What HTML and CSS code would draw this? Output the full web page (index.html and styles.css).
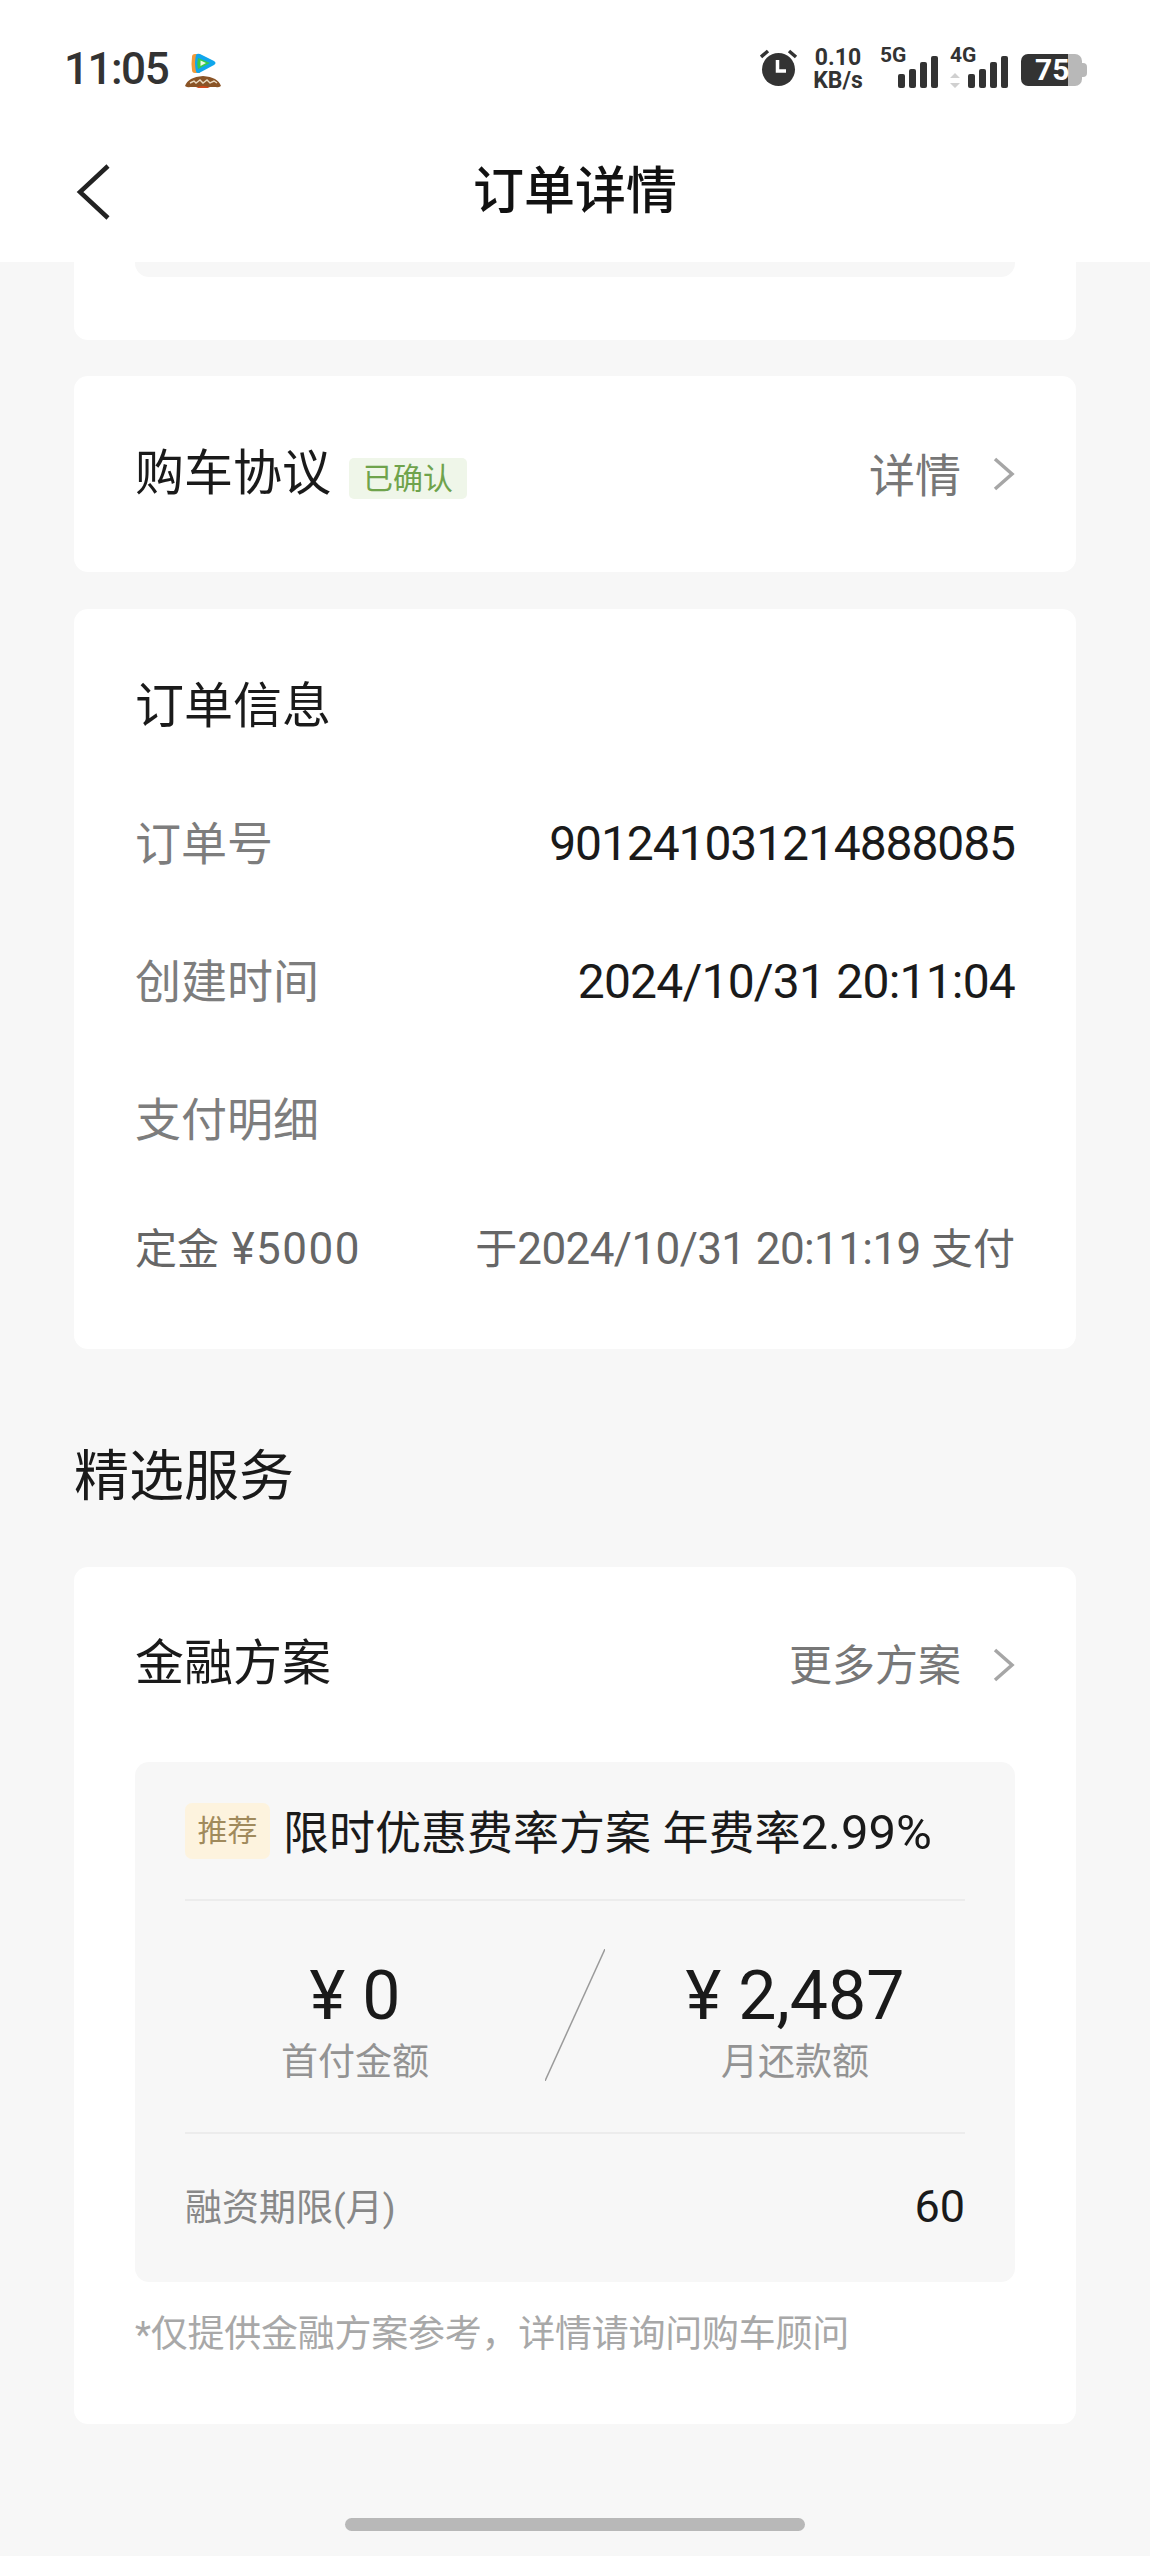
FILE: index.html
```html
<!DOCTYPE html>
<html lang="zh-CN">
<head>
    <meta charset="UTF-8">
    <meta name="viewport" content="width=device-width, initial-scale=1.0">
    <title>订单详情</title>
    <link rel="stylesheet" href="styles.css">
</head>
<body>
    <div id="header">
        <div class="status">
            <div class="status-left">
                <span class="time">11:05</span>
                <svg class="app-icon" width="38" height="36" viewBox="0 0 38 36">
                    <path d="M10 1 q-3 0 -3 3 q-1 7 0 13 q0 3 3 3 h5 v-19z" fill="#f29a38"/>
                    <path d="M11 2 q1 -2 4 -1 l14 7 q3 2 0 4 l-14 7.500 q-3 1.500 -4 -1 q-2 -8 0 -16.500z" fill="#10a6ec"/>
                    <path d="M13 5 l12 5 l-12 6 q-1.500 -5.500 0 -11z" fill="#36cb4a"/>
                    <path d="M15.500 7.500 l5.500 2.500 l-5.500 3z" fill="#eafbe8"/>
                    <path d="M0 33 q3 -9 18 -10 q15 1 18 10 q-3 2 -5 1 h-26 q-2 1 -5 -1z" fill="#8a5426"/>
                    <path d="M5 30 l4 -2 l2 2 l4 -3 l3 3 l4 -3 l3 3 l4 -2 l3 2" fill="none" stroke="#e8d9c0" stroke-width="1.400"/>
                    <path d="M11 35 q7 -4 14 0z" fill="#d24a1c"/>
                </svg>
            </div>
            <div class="status-right">
                <svg class="alarm" width="38" height="38" viewBox="0 0 38 38">
                    <circle cx="18.500" cy="20.500" r="16.500" fill="#333"/>
                    <path d="M1 8 L8 2 M36 8 L29 2" stroke="#333" stroke-width="3.500"/>
                    <path d="M17.500 11 V22 H26" fill="none" stroke="#fff" stroke-width="3.500"/>
                </svg>
                <div class="speed"><span>0.10</span><span>KB/s</span></div>
                <svg class="signal signal-5g" width="58" height="44" viewBox="0 0 58 44">
                    <text x="0" y="18">5G</text>
                    <rect x="18" y="30" width="7" height="14" rx="2"/>
                    <rect x="29" y="25" width="7" height="19" rx="2"/>
                    <rect x="40" y="18" width="7" height="26" rx="2"/>
                    <rect x="51" y="12" width="7" height="32" rx="2"/>
                </svg>
                <svg class="signal signal-4g" width="58" height="44" viewBox="0 0 58 44">
                    <text x="0" y="18">4G</text>
                    <path d="M5 29 l5 5 h-10z M5 44 l5 -5 h-10z" class="arrows"/>
                    <rect x="18" y="30" width="7" height="14" rx="2"/>
                    <rect x="29" y="25" width="7" height="19" rx="2"/>
                    <rect x="40" y="18" width="7" height="26" rx="2"/>
                    <rect x="51" y="12" width="7" height="32" rx="2"/>
                </svg>
                <div class="battery"><span>75</span></div>
            </div>
        </div>
        <div class="nav">
            <svg class="back" width="36" height="56" viewBox="0 0 36 56">
                <path d="M33 2 L5 28 L33 54" fill="none" stroke="#222" stroke-width="4.500"/>
            </svg>
            <h1>订单详情</h1>
        </div>
    </div>

    <div id="main">
        <div class="card card-stub"><div class="stub-inner"></div></div>

        <div class="card card-agreement">
            <div class="head-row">
                <div class="head-left">
                    <span class="card-title">购车协议</span>
                    <span class="tag-green">已确认</span>
                </div>
                <div class="more">
                    <span>详情</span>
                    <svg class="chevron" width="22" height="34" viewBox="0 0 22 34"><path d="M2 2 L19 17 L2 32" fill="none" stroke="#a6a6a6" stroke-width="3.500"/></svg>
                </div>
            </div>
        </div>

        <div class="card card-order">
            <div class="card-title order-title">订单信息</div>
            <div class="info-row"><span class="label">订单号</span><span class="value">901241031214888085</span></div>
            <div class="info-row"><span class="label">创建时间</span><span class="value value-date">2024/10/31 20:11:04</span></div>
            <div class="info-row"><span class="label">支付明细</span></div>
            <div class="info-row pay-row">
                <span class="pay-amount"><span class="pay-cn">定金</span> ¥5000</span>
                <span><span class="pay-cn">于</span>2024/10/31 20:11:19 <span class="pay-cn">支付</span></span>
            </div>
        </div>

        <h2>精选服务</h2>

        <div class="card card-finance">
            <div class="head-row finance-head">
                <span class="card-title">金融方案</span>
                <div class="more">
                    <span>更多方案</span>
                    <svg class="chevron" width="22" height="34" viewBox="0 0 22 34"><path d="M2 2 L19 17 L2 32" fill="none" stroke="#a6a6a6" stroke-width="3.500"/></svg>
                </div>
            </div>
            <div class="plan">
                <div class="plan-top">
                    <span class="tag-gold">推荐</span>
                    <span class="plan-name">限时优惠费率方案 年费率<span class="plan-rate">2.99%</span></span>
                </div>
                <div class="plan-stats">
                    <div class="stat">
                        <div class="amount">¥ 0</div>
                        <div class="stat-label">首付金额</div>
                    </div>
                    <svg class="slash" width="60" height="132" viewBox="0 0 60 132"><path d="M60 0 L0 132" stroke="#9a9a9a" stroke-width="1.500"/></svg>
                    <div class="stat">
                        <div class="amount">¥ 2,487</div>
                        <div class="stat-label">月还款额</div>
                    </div>
                </div>
                <div class="plan-term"><span class="term-label">融资期限(月)</span><span class="term-value">60</span></div>
            </div>
            <p class="note">*仅提供金融方案参考，详情请询问购车顾问</p>
        </div>

        <div class="home-bar"></div>
    </div>
</body>
</html>
```

FILE: styles.css
```css
* {
    box-sizing: border-box;
}
body {
    margin: 0;
    background-color: #f7f7f7;
    font-family: Roboto, "Noto Sans CJK SC", sans-serif;
    color: #1a1a1a;
    height: 2556px;
    overflow: hidden;
}
#header {
    background-color: #fff;
    height: 262px;
}
.status {
    height: 122px;
    padding: 46px 68px 0 64px;
    display: flex;
    justify-content: space-between;
    align-items: flex-start;
}
.status-left {
    display: flex;
    align-items: flex-start;
    gap: 17px;
}
.time {
    font-size: 44px;
    line-height: 46px;
    font-weight: 500;
    letter-spacing: -1.5px;
    color: #333;
}
.app-icon {
    margin-top: 7px;
}
.status-right {
    display: flex;
    align-items: flex-start;
    margin-top: 4px;
}
.alarm {
    margin-top: -1px;
    margin-right: 15px;
}
.speed {
    width: 50px;
    margin-top: -4px;
    margin-right: 17px;
    display: flex;
    flex-direction: column;
    align-items: center;
    font-size: 23px;
    line-height: 23px;
    font-weight: 700;
    color: #333;
}
.signal {
    margin-top: -6px;
    fill: #333;
}
.signal text {
    font-size: 21px;
    font-weight: 700;
    font-family: Roboto, sans-serif;
}
.signal-5g {
    margin-right: 12px;
}
.signal-4g {
    margin-right: 13px;
}
.signal .arrows {
    fill: #d0d0d0;
}
.battery {
    position: relative;
    width: 61px;
    height: 32px;
    margin-top: 4px;
    border-radius: 7px;
    background: linear-gradient(to right, #333 47px, #b8b8b8 47px);
    color: #fff;
    font-size: 30px;
    line-height: 32px;
    font-weight: 700;
    padding-left: 14px;
}
.battery::after {
    content: "";
    position: absolute;
    right: -5px;
    top: 9px;
    width: 5px;
    height: 14px;
    background-color: #b8b8b8;
    border-radius: 0 4px 4px 0;
}
.nav {
    height: 140px;
    padding-left: 75px;
    display: flex;
    align-items: center;
    position: relative;
}
.nav h1 {
    position: absolute;
    left: 0;
    right: 0;
    margin: 0;
    text-align: center;
    font-size: 51px;
    line-height: 70px;
    font-weight: 500;
    color: #111;
}
#main {
    padding: 0 74px;
}
.card {
    background-color: #fff;
    border-radius: 14px;
    padding: 0 61px;
}
.card-stub {
    height: 78px;
    border-radius: 0 0 14px 14px;
    margin-bottom: 36px;
}
.stub-inner {
    height: 15px;
    background-color: #f7f7f7;
    border-radius: 0 0 14px 14px;
}
.card-agreement {
    height: 196px;
    margin-bottom: 37px;
    display: flex;
    align-items: center;
}
.head-row {
    width: 100%;
    display: flex;
    justify-content: space-between;
    align-items: center;
}
.head-left {
    display: flex;
    align-items: center;
    gap: 18px;
}
.card-title {
    font-size: 49px;
    line-height: 70px;
}
.tag-green {
    margin-top: 8px;
    height: 41px;
    padding: 0 14px;
    background-color: #eff6e9;
    color: #6fa34c;
    font-size: 30px;
    line-height: 41px;
    border-radius: 5px;
}
.more {
    display: flex;
    align-items: center;
    gap: 32px;
    color: #777;
    font-size: 46px;
}
.more span {
    margin-bottom: 5px;
}
.card-order {
    height: 740px;
    padding-top: 63px;
}
.order-title {
    display: block;
    margin-bottom: 32px;
}
.info-row {
    height: 138px;
    display: flex;
    justify-content: space-between;
    align-items: center;
    font-size: 46px;
}
.label {
    color: #7d7d7d;
    margin-bottom: 6px;
}
.value {
    font-size: 48px;
    letter-spacing: -1.1px;
    color: #1a1a1a;
}
.value-date {
    letter-spacing: -0.8px;
}
.pay-row {
    height: 124px;
    padding-bottom: 10px;
    font-size: 44px;
    letter-spacing: -0.6px;
    color: #666;
}
.pay-amount {
    letter-spacing: 1.5px;
}
.pay-cn {
    font-size: 42px;
    letter-spacing: 0;
}
h2 {
    margin: 92px 0 56px;
    font-size: 55px;
    line-height: 70px;
    font-weight: 400;
    color: #1a1a1a;
}
.card-finance {
    height: 857px;
}
.finance-head {
    height: 195px;
}
.finance-head .card-title {
    margin-bottom: 2px;
}
.finance-head .more {
    font-size: 43px;
}
.plan {
    height: 520px;
    background-color: #f7f7f7;
    border-radius: 14px;
    padding: 0 50px;
}
.plan-top {
    height: 139px;
    display: flex;
    align-items: center;
    gap: 13px;
    border-bottom: 2px solid #ececec;
}
.tag-gold {
    width: 85px;
    height: 56px;
    background-color: #fdf3de;
    color: #a08a5c;
    font-size: 30px;
    line-height: 56px;
    text-align: center;
    border-radius: 7px;
}
.plan-name {
    margin-top: 5px;
    font-size: 46px;
    line-height: 60px;
}
.plan-rate {
    font-size: 49px;
}
.plan-stats {
    height: 233px;
    display: grid;
    grid-template-columns: 340px 100px 340px;
    align-items: center;
    justify-items: center;
    border-bottom: 2px solid #ececec;
}
.stat {
    margin-top: 10px;
    text-align: center;
}
.slash {
    margin-bottom: 3px;
}
.amount {
    font-size: 68px;
    line-height: 80px;
}
.stat-label {
    margin-top: 2px;
    font-size: 37px;
    line-height: 50px;
    color: #939393;
}
.plan-term {
    height: 148px;
    padding-bottom: 3px;
    display: flex;
    justify-content: space-between;
    align-items: center;
}
.term-label {
    margin-bottom: 3px;
    font-size: 37px;
    color: #888;
}
.term-value {
    font-size: 45px;
}
.note {
    margin: 28px 0 0;
    font-size: 37px;
    line-height: 50px;
    letter-spacing: -0.25px;
    color: #a8a8a8;
}
.home-bar {
    width: 460px;
    height: 13px;
    margin: 94px auto 0;
    background-color: #b8b8b8;
    border-radius: 7px;
}
```
